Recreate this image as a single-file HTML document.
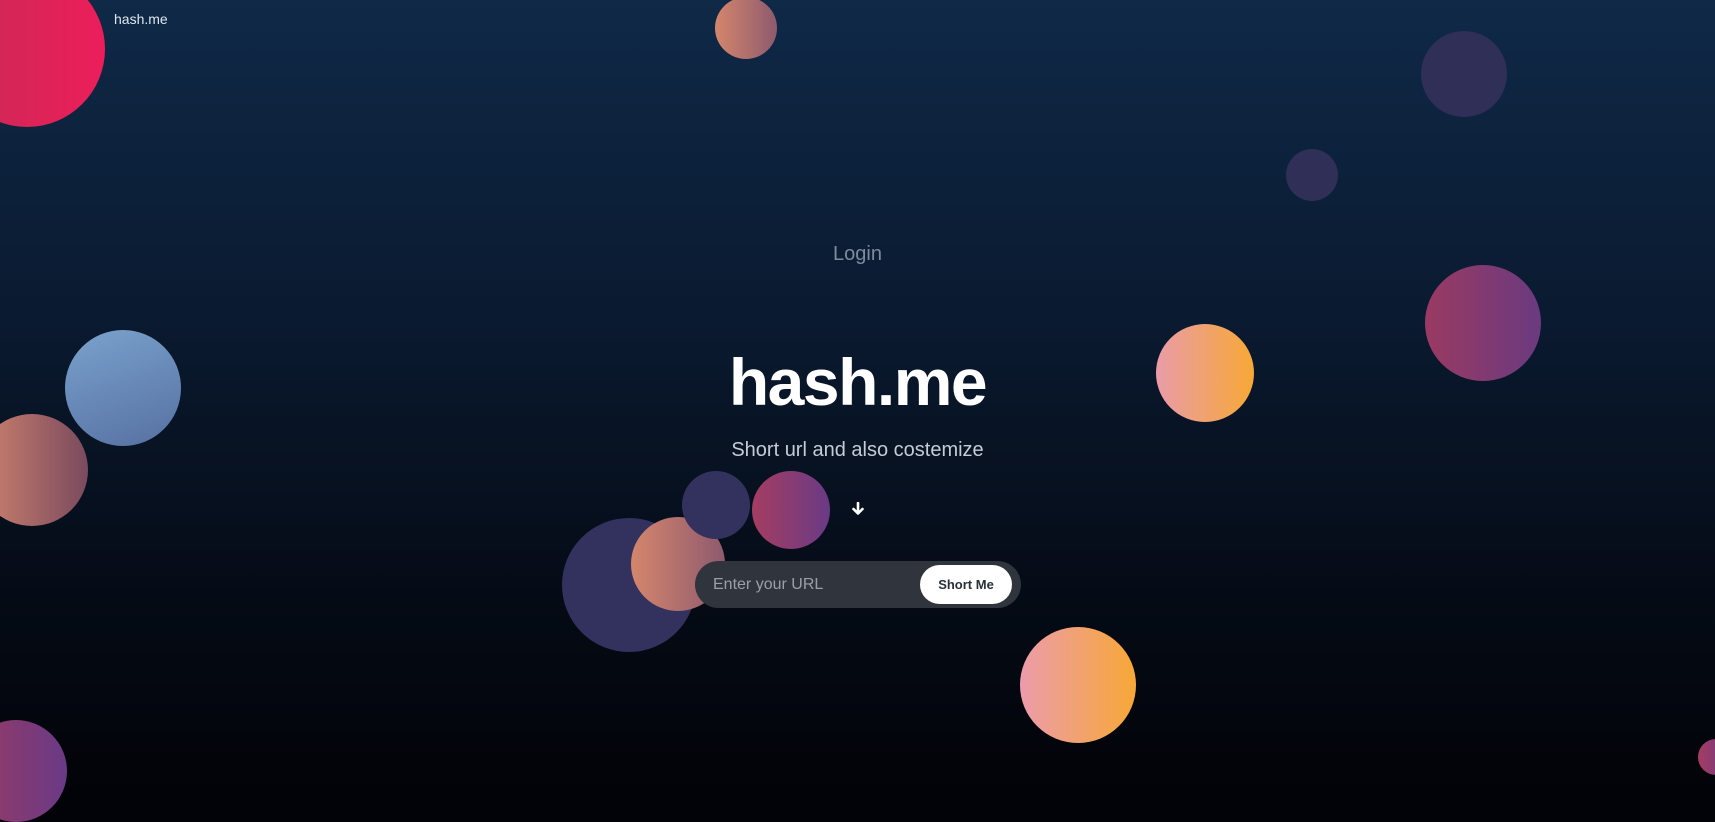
<!DOCTYPE html>
<html style="background:#020308"><head><meta charset="utf-8"><style>
html,body{margin:0;padding:0}
body{width:1715px;height:792px;overflow:hidden;position:relative;background:linear-gradient(#0f2947 0%,#0a1a30 40%,#050b16 75%,#020308 100%);font-family:"Liberation Sans",sans-serif}
.c{position:absolute;border-radius:50%}
.t{position:absolute;left:0;width:1715px;text-align:center}
</style></head><body>
<div class="c" style="left:-51px;top:-29px;width:156px;height:156px;background:linear-gradient(90deg,#c92a55,#ec1e5a)"></div>
<div class="c" style="left:715px;top:-3px;width:62px;height:62px;background:linear-gradient(90deg,#d4866c,#8e5a6e)"></div>
<div class="c" style="left:1421px;top:31px;width:86px;height:86px;background:#2f2f58"></div>
<div class="c" style="left:1286px;top:149px;width:52px;height:52px;background:#2f2f58"></div>
<div class="c" style="left:1425px;top:265px;width:116px;height:116px;background:linear-gradient(90deg,#9a3a62,#6a3a80)"></div>
<div class="c" style="left:1156px;top:324px;width:98px;height:98px;background:linear-gradient(90deg,#e99ca8,#f7a836)"></div>
<div class="c" style="left:65px;top:330px;width:116px;height:116px;background:linear-gradient(160deg,#7aa2cc,#5670a2)"></div>
<div class="c" style="left:-24px;top:414px;width:112px;height:112px;background:linear-gradient(90deg,#d0836e,#7a4a5e)"></div>
<div class="c" style="left:562px;top:518px;width:134px;height:134px;background:#33325e"></div>
<div class="c" style="left:631px;top:517px;width:94px;height:94px;background:linear-gradient(90deg,#d4866c,#8e5a6e)"></div>
<div class="c" style="left:682px;top:471px;width:68px;height:68px;background:#33325e"></div>
<div class="c" style="left:752px;top:471px;width:78px;height:78px;background:linear-gradient(90deg,#a53d62,#6a3a86)"></div>
<div class="c" style="left:1020px;top:627px;width:116px;height:116px;background:linear-gradient(90deg,#ec9cab,#f7a836)"></div>
<div class="c" style="left:-35px;top:720px;width:102px;height:102px;background:linear-gradient(90deg,#9a3a62,#6a3a86)"></div>
<div class="c" style="left:1698px;top:739px;width:36px;height:36px;background:linear-gradient(90deg,#a53d62,#6a3a86)"></div>

<div style="position:absolute;left:114px;top:11px;color:#dfe6ee;font-size:14px">hash.me</div>
<div class="t" style="top:243px;color:#7f8a9a;font-size:20px;font-weight:300">Login</div>
<div class="t" style="top:344px;color:#fff;font-size:66px;font-weight:bold;letter-spacing:-1.5px">hash.me</div>
<div class="t" style="top:439px;color:#c5ccd5;font-size:20px;font-weight:300">Short url and also costemize</div>
<svg style="position:absolute;left:851px;top:502px" width="14" height="14" viewBox="0 0 14 14"><path d="M7 1v10M2.5 7l4.5 4.5L11.5 7" stroke="#fff" stroke-width="2.6" fill="none" stroke-linecap="round" stroke-linejoin="round"/></svg>
<div style="position:absolute;left:695px;top:561px;width:326px;height:47px;border-radius:24px;background:#2f343d">
  <div style="position:absolute;left:18px;top:15px;color:#9aa0a8;font-size:16px">Enter your URL</div>
  <div style="position:absolute;left:225px;top:4px;width:92px;height:39px;border-radius:20px;background:#fff;color:#2a2f38;font-size:13px;font-weight:bold;text-align:center;line-height:39px">Short Me</div>
</div>
</body></html>
